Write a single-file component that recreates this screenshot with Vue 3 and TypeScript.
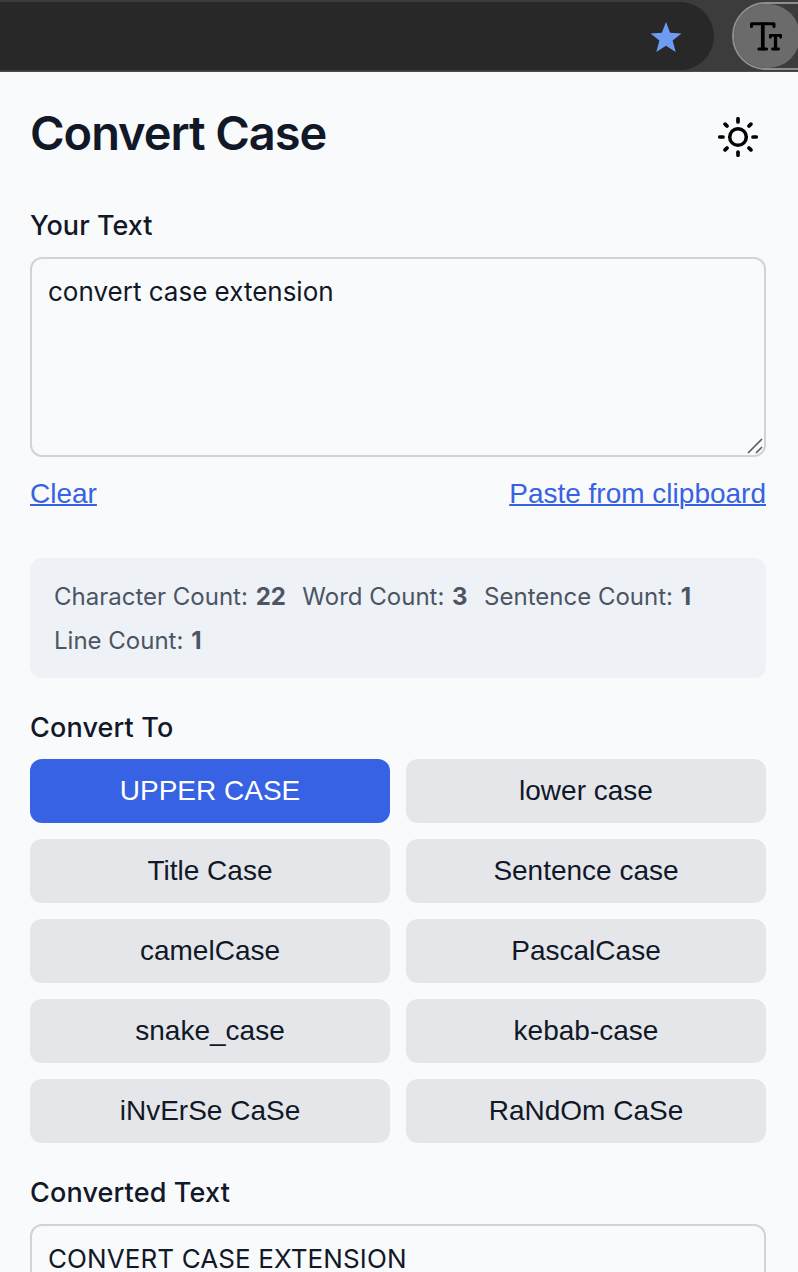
<script setup lang="ts">
import { computed, ref } from 'vue'

type CaseId =
  | 'upper' | 'lower' | 'title' | 'sentence' | 'camel'
  | 'pascal' | 'snake' | 'kebab' | 'inverse' | 'random'

interface CaseOption {
  id: CaseId
  label: string
}

const options: CaseOption[] = [
  { id: 'upper', label: 'UPPER CASE' },
  { id: 'lower', label: 'lower case' },
  { id: 'title', label: 'Title Case' },
  { id: 'sentence', label: 'Sentence case' },
  { id: 'camel', label: 'camelCase' },
  { id: 'pascal', label: 'PascalCase' },
  { id: 'snake', label: 'snake_case' },
  { id: 'kebab', label: 'kebab-case' },
  { id: 'inverse', label: 'iNvErSe CaSe' },
  { id: 'random', label: 'RaNdOm CaSe' },
]

const text = ref('convert case extension')
const active = ref<CaseId>('upper')

const words = computed<string[]>(() => text.value.trim().split(/\s+/).filter(Boolean))
const stats = computed(() => [
  { label: 'Character Count:', value: text.value.length },
  { label: 'Word Count:', value: words.value.length },
  { label: 'Sentence Count:', value: text.value.split(/[.!?]+/).filter((s) => s.trim()).length },
  { label: 'Line Count:', value: text.value.split('\n').length },
])

const capital = (w: string): string => w.charAt(0).toUpperCase() + w.slice(1).toLowerCase()

const converters: Record<CaseId, (s: string) => string> = {
  upper: (s) => s.toUpperCase(),
  lower: (s) => s.toLowerCase(),
  title: (s) => s.replace(/\S+/g, capital),
  sentence: (s) => s.toLowerCase().replace(/(^|[.!?]\s+)(\w)/g, (m) => m.toUpperCase()),
  camel: () => words.value.map((w, i) => (i ? capital(w) : w.toLowerCase())).join(''),
  pascal: () => words.value.map(capital).join(''),
  snake: () => words.value.join('_').toLowerCase(),
  kebab: () => words.value.join('-').toLowerCase(),
  inverse: (s) => [...s].map((c, i) => (i % 2 ? c.toUpperCase() : c.toLowerCase())).join(''),
  random: (s) => [...s].map((c) => (Math.random() < 0.5 ? c.toUpperCase() : c.toLowerCase())).join(''),
}

const converted = computed(() => converters[active.value](text.value))

async function paste(): Promise<void> {
  text.value = await navigator.clipboard.readText()
}
</script>

<template>
  <div class="window">
    <div class="toolbar">
      <div class="address">
        <svg class="star" viewBox="0 0 32 31" width="32" height="31">
          <path d="M16 0 L20.1 10.7 L31.5 11.4 L22.6 18.6 L25.7 30 L16 23.7 L6.3 30 L9.4 18.6 L0.5 11.4 L11.9 10.7 Z" fill="#6f9cf3" />
        </svg>
      </div>
      <div class="extension">
        <div class="extension-disc">
          <svg viewBox="0 0 32 29" width="32" height="29" fill="none" stroke="#000" stroke-linecap="round" stroke-linejoin="round">
            <path d="M1.5 4.5 V1.8 H24 V4.5 M8.8 27 H16.6" stroke-width="3" />
            <path d="M12.8 2 V26.6" stroke-width="3.7" />
            <path d="M20.3 15.3 V13.3 H30.6 V15.3 M22.5 27 H28.6" stroke-width="2.8" />
            <path d="M25.5 13.6 V26.6" stroke-width="3.3" />
          </svg>
        </div>
      </div>
    </div>

    <main class="popup">
      <header class="header">
        <h1 class="title">Convert Case</h1>
        <button class="theme" aria-label="Toggle theme">
          <svg viewBox="0 0 40 40" width="40" height="40" fill="none" stroke="#000" stroke-linecap="round">
            <circle cx="20" cy="20" r="8.3" stroke-width="3.5" />
            <path
              d="M20 1.8 V5 M20 35 V38.2 M1.8 20 H5 M35 20 H38.2 M7.1 7.1 L9 9 M31 31 L32.9 32.9 M7.1 32.9 L9 31 M31 9 L32.9 7.1"
              stroke-width="3.7"
            />
          </svg>
        </button>
      </header>

      <label class="label your" for="source"><span>Your Text</span></label>
      <div class="field">
        <textarea id="source" v-model="text" class="area" spellcheck="false"></textarea>
        <svg class="grip" viewBox="0 0 16 16" width="16" height="16" stroke="#5c5c5c" stroke-width="1.7">
          <path d="M1 15 L15 1 M9 15 L15 9" />
        </svg>
      </div>

      <div class="actions">
        <button class="link" @click="text = ''">Clear</button>
        <button class="link" @click="paste">Paste from clipboard</button>
      </div>

      <div class="stats">
        <span v-for="s in stats" :key="s.label" class="stat">{{ s.label }} <b>{{ s.value }}</b></span>
      </div>

      <div class="label to"><span>Convert To</span></div>
      <div class="grid">
        <button
          v-for="o in options"
          :key="o.id"
          class="case"
          :class="{ active: active === o.id }"
          @click="active = o.id"
        >
          {{ o.label }}
        </button>
      </div>

      <label class="label out" for="result"><span>Converted Text</span></label>
      <textarea id="result" class="area result" :value="converted" readonly spellcheck="false"></textarea>
    </main>
  </div>
</template>

<style>
body {
  margin: 0;
  background: #f9fafc;
}
</style>

<style scoped>
.window {
  width: 798px;
  height: 1272px;
  overflow: hidden;
  background: #f9fafc;
  color: #111827;
  font-family: Inter, "Liberation Sans", sans-serif;
}
.toolbar {
  box-sizing: border-box;
  height: 72px;
  display: flex;
  gap: 18px;
  padding-top: 2px;
  background: #3c3c3c;
  border-bottom: 1px solid #4a4a4a;
  overflow: hidden;
}
.address {
  box-sizing: border-box;
  flex: none;
  width: 714px;
  height: 68px;
  padding: 20px 32px 0 0;
  display: flex;
  justify-content: flex-end;
  background: #282828;
  border-radius: 0 34px 34px 0;
}
.star {
  display: block;
}
.extension {
  box-sizing: border-box;
  flex: none;
  width: 140px;
  height: 68px;
  border: 2px solid #8e8e8e;
  border-radius: 34px;
}
.extension-disc {
  box-sizing: border-box;
  width: 66px;
  height: 64px;
  padding: 18px 0 0 16px;
  background: #6b6b6b;
  border-radius: 32px;
}
.extension-disc svg {
  display: block;
}
.popup {
  padding: 30px 32px 0 30px;
}
.header {
  display: flex;
  justify-content: space-between;
  height: 106px;
}
.title {
  margin: 0;
  font-size: 47px;
  font-weight: 600;
  line-height: 62px;
  letter-spacing: -1.05px;
}
.theme {
  width: 40px;
  height: 40px;
  margin: 15px 8px 0 0;
  padding: 0;
  border: 0;
  background: none;
}
.theme svg {
  display: block;
}
.label {
  display: block;
  height: 49px;
  font-size: 27px;
  font-weight: 500;
  line-height: 36px;
  letter-spacing: 0.15px;
}
.your {
  letter-spacing: 0.05px;
}
.field {
  position: relative;
  height: 200px;
}
.area {
  box-sizing: border-box;
  display: block;
  width: 736px;
  height: 200px;
  margin: 0;
  padding: 14px 16px;
  border: 2px solid #d1d3da;
  border-radius: 12px;
  outline: none;
  resize: none;
  overflow: hidden;
  background: transparent;
  color: #111827;
  font: 400 26px/38px Inter, "Liberation Sans", sans-serif;
}
.result {
  letter-spacing: 0.1px;
}
.grip {
  position: absolute;
  right: 3px;
  bottom: 3px;
}
.actions {
  display: flex;
  justify-content: space-between;
  height: 101px;
  padding-top: 21px;
  box-sizing: border-box;
}
.link {
  height: 32px;
  padding: 0;
  border: 0;
  background: none;
  color: #3762e3;
  font: 28px/32px "Liberation Sans", Arial, sans-serif;
  text-decoration: underline;
  text-decoration-thickness: 2px;
}
.stats {
  box-sizing: border-box;
  height: 120px;
  padding: 17px 24px 15px;
  display: flex;
  flex-wrap: wrap;
  column-gap: 16.5px;
  background: #eef1f6;
  border-radius: 12px;
  color: #4b5563;
  font-size: 24px;
  line-height: 44px;
}
.stat b {
  margin-left: 1px;
  font-weight: 700;
}
.to {
  margin-top: 32px;
}
.grid {
  display: grid;
  grid-template-columns: 1fr 1fr;
  grid-auto-rows: 64px;
  gap: 16px;
}
.case {
  padding: 0;
  border: 0;
  border-radius: 12px;
  background: #e5e6ea;
  color: #111827;
  font: 28px/32px "Liberation Sans", Arial, sans-serif;
}
.case.active {
  background: #3762e3;
  color: #fff;
}
.out {
  margin-top: 32px;
}
</style>
